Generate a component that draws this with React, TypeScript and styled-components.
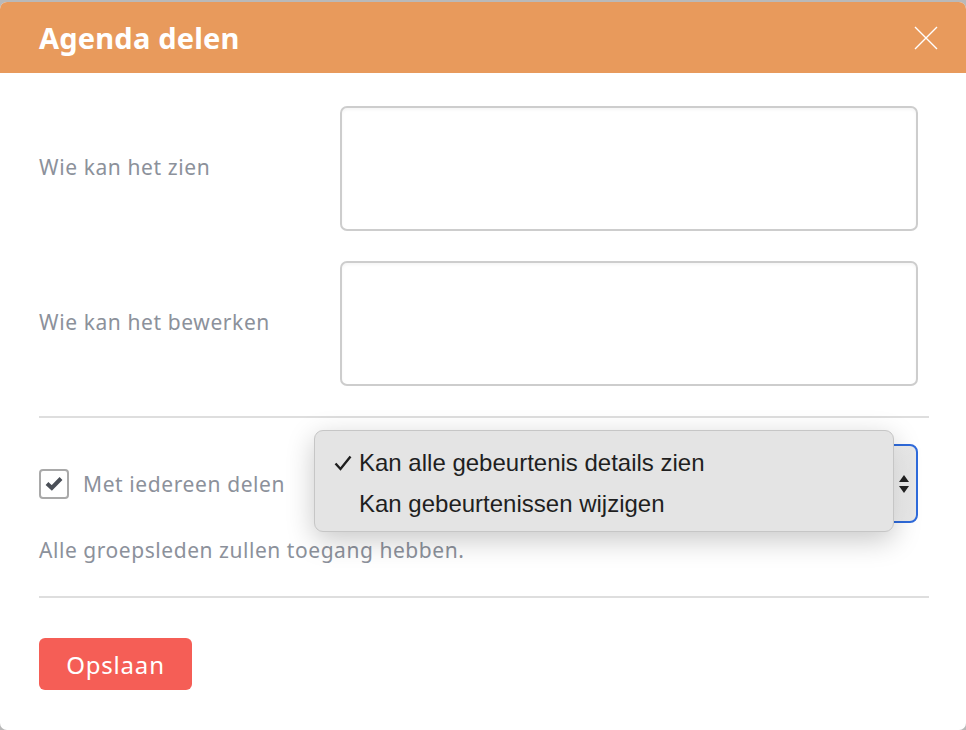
import React from "react";
import styled, { createGlobalStyle } from "styled-components";

const GlobalStyle = createGlobalStyle`
  html, body {
    margin: 0;
    padding: 0;
    background: #b9b9b9;
    height: 100%;
  }

  body {
    font-family: "Noto Sans", "Open Sans", sans-serif;
  }

  * {
    box-sizing: border-box;
  }
`;

export default function App() {
  return (
    <>
      <GlobalStyle />
      <Modal>
        <Header>
          <Title>{"Agenda delen"}</Title>
          <CloseButton aria-label="Sluiten">
            <svg width="24" height="24" viewBox="0 0 24 24">
              <path
                d="M1 1 L23 23 M23 1 L1 23"
                stroke="#fff"
                strokeWidth="1.4"
                fill="none"
              />
            </svg>
          </CloseButton>
        </Header>
        <Body>
          <FieldRow>
            <Label>{"Wie kan het zien"}</Label>
            <TextBox />
          </FieldRow>
          <FieldRow>
            <Label>{"Wie kan het bewerken"}</Label>
            <TextBox />
          </FieldRow>
          <Divider />
          <ShareRow>
            <CheckLabel>
              <CheckBox>
                <svg width="18" height="15" viewBox="0 0 18 15">
                  <path
                    d="M2 7.5 L6.8 12 L16 2.5"
                    stroke="#4a4f57"
                    strokeWidth="4"
                    fill="none"
                  />
                </svg>
              </CheckBox>
              {"Met iedereen delen"}
            </CheckLabel>
            <SelectWrap>
              <SelectBox>
                <Arrows>
                  <svg width="12" height="22" viewBox="0 0 12 22">
                    <path d="M6 2 L11 9 L1 9 Z" fill="#222" />
                    <path d="M6 20 L11 13 L1 13 Z" fill="#222" />
                  </svg>
                </Arrows>
              </SelectBox>
              <Popup>
                <Option>
                  <Tick>
                    <svg width="18" height="16" viewBox="0 0 18 16">
                      <path
                        d="M1.5 8.5 L6.5 14 L16.5 1.5"
                        stroke="#1f1f1f"
                        strokeWidth="2.4"
                        fill="none"
                      />
                    </svg>
                  </Tick>
                  {"Kan alle gebeurtenis details zien"}
                </Option>
                <Option>
                  <Tick />
                  {"Kan gebeurtenissen wijzigen"}
                </Option>
              </Popup>
            </SelectWrap>
          </ShareRow>
          <Hint>{"Alle groepsleden zullen toegang hebben."}</Hint>
          <Divider />
          <Footer>
            <SaveButton>{"Opslaan"}</SaveButton>
          </Footer>
        </Body>
      </Modal>
    </>
  );
}

const Modal = styled.div`
  margin-top: 2px;
  height: 728px;
  width: 966px;

  background: #fff;
  border-radius: 7px;

  overflow: hidden;
`;

const Header = styled.div`
  display: flex;
  align-items: center;
  justify-content: space-between;

  height: 71px;
  padding: 0 28px 0 39px;

  background-color: #e89a5c;
`;

const Title = styled.h1`
  margin: 0;

  font-size: 29px;
  font-weight: 700;
  color: #fff;
  letter-spacing: 0.2px;
`;

const CloseButton = styled.button`
  display: flex;
  padding: 0;

  background: none;
  border: none;
`;

const Body = styled.div`
  padding: 33px 37px 0 39px;
`;

const FieldRow = styled.div`
  display: flex;
  align-items: center;

  margin-bottom: 30px;
`;

const Label = styled.div`
  width: 301px;
  padding-bottom: 4px;

  font-size: 21px;
  letter-spacing: 0.6px;
  color: #8c919b;
`;

const TextBox = styled.div`
  flex: 1;
  height: 125px;
  margin-right: 11px;

  border: 2px solid #cdcdcd;
  border-radius: 7px;
  box-shadow: inset 0 2px 3px rgba(0, 0, 0, 0.04);
`;

const Divider = styled.hr`
  margin: 0;

  border: none;
  border-top: 2px solid #dedede;
`;

const ShareRow = styled.div`
  display: flex;
  align-items: center;
  justify-content: space-between;

  margin-top: 26px;
  padding-right: 11px;
`;

const CheckLabel = styled.label`
  display: flex;
  align-items: center;
  gap: 14px;

  font-size: 21px;
  letter-spacing: 0.6px;
  color: #8c919b;
`;

const CheckBox = styled.span`
  display: flex;
  align-items: center;
  justify-content: center;

  width: 30px;
  height: 30px;

  border: 2px solid #a9a9a9;
  border-radius: 4px;
`;

const SelectWrap = styled.div`
  position: relative;
`;

const SelectBox = styled.div`
  display: flex;
  align-items: center;
  justify-content: flex-end;

  width: 590px;
  height: 79px;
  padding-right: 6px;

  border: 2px solid #2f6bdc;
  border-radius: 8px;
  background: linear-gradient(to right, #fff 94%, #e9e9e9 99%);
`;

const Arrows = styled.span`
  display: flex;
`;

const Popup = styled.div`
  position: absolute;
  left: -14px;
  top: -14px;

  width: 580px;
  padding: 11px 0 7px;

  background: #e4e4e4;
  border: 1px solid #c6c6c6;
  border-radius: 9px;
  box-shadow: 0 8px 28px rgba(0, 0, 0, 0.22);

  font-family: "Liberation Sans", Arial, sans-serif;
  font-size: 24px;
  color: #1f1f1f;
`;

const Option = styled.div`
  display: flex;
  align-items: center;

  height: 41px;
  padding-left: 19px;
`;

const Tick = styled.span`
  display: flex;
  width: 25px;
`;

const Hint = styled.p`
  margin: 13px 0 32px;

  font-size: 21px;
  color: #8c919b;
  letter-spacing: 0.55px;
`;

const Footer = styled.div`
  padding-top: 40px;
`;

const SaveButton = styled.button`
  width: 153px;
  height: 52px;

  background: #f55e56;
  border: none;
  border-radius: 6px;

  font-family: "Noto Sans", "Open Sans", sans-serif;
  font-size: 24px;
  letter-spacing: 0.8px;
  color: #fff;
`;
